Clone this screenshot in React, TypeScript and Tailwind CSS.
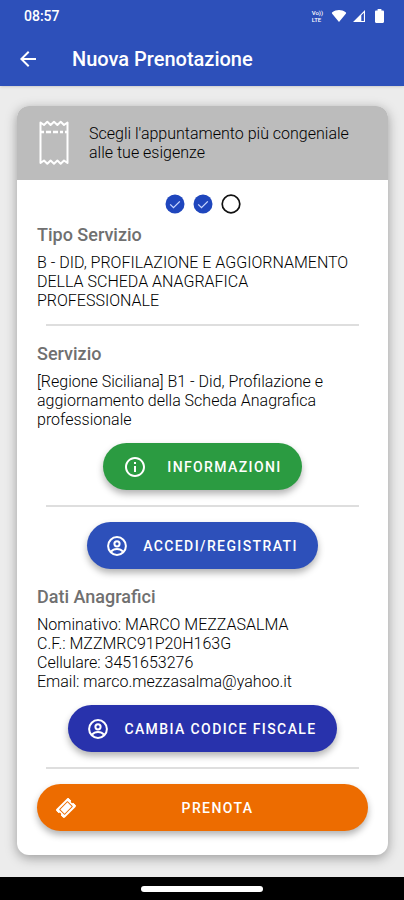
import type { ReactNode } from 'react';
import clsx from 'clsx';
import { FaTicketAlt } from 'react-icons/fa';
import { MdArrowBack, MdInfoOutline } from 'react-icons/md';

const StatusBar = () => (
	<div className="flex h-8 items-center justify-between pl-6 pr-5 text-sm font-medium">
		<span>08:57</span>
		<div className="flex items-center gap-1">
			<div className="flex flex-col text-[6px] font-medium leading-[7px]">
				<span>Vo))</span>
				<span>LTE</span>
			</div>
			<svg viewBox="0 0 16 13" className="ml-1 h-3 w-4" fill="currentColor">
				<path d="M8 13 .6 4.1C.1 3.500.2 2.800.8 2.400 5-.8 11-.8 15.200 2.400c.6.4.7 1.100.2 1.700Z" />
			</svg>
			<svg viewBox="0 0 14 13" className="h-3 w-4" fill="currentColor">
				<path fillRule="evenodd" d="M13.500 0v13H.5ZM12.300 3v8.800H9.500V5.800Z" />
			</svg>
			<svg viewBox="0 0 9 14" className="ml-1 h-3.5 w-[9px]" fill="currentColor">
				<path d="M2.600 0h3.800v1.500h1.400c.7 0 1.200.5 1.200 1.200v10.100c0 .7-.5 1.200-1.200 1.200H1.200C.5 14 0 13.500 0 12.800V2.700C0 2 .5 1.500 1.200 1.500h1.400Z" />
			</svg>
		</div>
	</div>
);

const ReceiptIcon = () => (
	<svg
		viewBox="0 0 30 46"
		className="h-[46px] w-[30px] shrink-0"
		fill="none"
		stroke="white"
		strokeWidth="2"
		strokeLinejoin="round"
		strokeLinecap="round"
	>
		<path d="M1.500 2.500 5 5l3.300-3.200L11.600 5 15 1.800 18.400 5l3.300-3.200L25 5l3.500-2.500v40.500L25 40.500l-3.300 3.200-3.300-3.200-3.400 3.200-3.400-3.200-3.300 3.200L5 40.500l-3.500 2.500Z" />
		<path d="M1.500 12H5M7 12h5M14 12h5M21 12h3M26 12h2.500" strokeWidth="2.500" strokeLinecap="butt" />
	</svg>
);

const AccountIcon = () => (
	<svg viewBox="0 0 20 20" className="size-5" fill="none" stroke="currentColor" strokeWidth="2">
		<circle cx="10" cy="10" r="8.900" />
		<circle cx="10" cy="7.800" r="2.600" />
		<path d="M4 15.600c1.500-1.800 3.700-2.700 6-2.700s4.500.9 6 2.700" />
	</svg>
);

const Step = ({ done }: { done: boolean }) => (
	<li aria-label={done ? 'Completato' : 'Da completare'}>
		<svg viewBox="0 0 20 20" className="size-5" fill="none">
			{done ? (
				<>
					<circle cx="10" cy="10" r="9.500" fill="#1f46bd" />
					<path d="m5.200 10.400 3.300 3.300 6.300-6.300" stroke="#c9d6ff" strokeWidth="1.300" />
				</>
			) : (
				<circle cx="10" cy="10" r="8.800" stroke="#111" strokeWidth="1.700" />
			)}
		</svg>
	</li>
);

type PillButtonProps = {
	icon: ReactNode;
	className?: string;
	children: ReactNode;
};

const PillButton = ({ icon, className, children }: PillButtonProps) => (
	<button
		type="button"
		className={clsx(
			'flex h-[47px] items-center rounded-full text-sm font-medium uppercase tracking-widest text-white shadow-[0_4px_7px_rgba(0,0,0,0.3)]',
			className,
		)}
	>
		{icon}
		{children}
	</button>
);

const Block = ({ title, children }: { title: string; children: ReactNode }) => (
	<div className="mb-3.5 flex flex-col gap-1.5">
		<h2 className="text-lg leading-6 font-medium text-[#707070]">{title}</h2>
		<div>{children}</div>
	</div>
);

const Divider = () => <hr className="mx-[9px] border-t-2 border-[#dedede]" />;

export default function App() {
	return (
		<div className="flex min-h-screen flex-col bg-[#ececec] font-[Roboto,sans-serif] text-black">
			<header className="bg-[#2d50ba] text-white shadow-sm">
				<StatusBar />
				<div className="flex h-[54px] items-center gap-8 px-4">
					<button type="button" aria-label="Indietro">
						<MdArrowBack className="size-6" />
					</button>
					<h1 className="text-xl font-medium">Nuova Prenotazione</h1>
				</div>
			</header>

			<main className="grow pt-5 pr-4 pb-5 pl-[17px]">
				<section className="overflow-hidden rounded-xl bg-white leading-[19px] font-light shadow-[0_3px_12px_rgba(0,0,0,0.35)]">
					<div className="flex items-center gap-5 bg-[#bcbcbc] px-[22px] py-3.5">
						<ReceiptIcon />
						<p>Scegli l&apos;appuntamento più congeniale alle tue esigenze</p>
					</div>

					<div className="flex flex-col px-5 pt-3.5 pb-6">
						<ol className="mb-[9px] flex justify-center gap-2">
							<Step done />
							<Step done />
							<Step done={false} />
						</ol>

						<Block title="Tipo Servizio">
							<p>B - DID, PROFILAZIONE E AGGIORNAMENTO DELLA SCHEDA ANAGRAFICA PROFESSIONALE</p>
						</Block>
						<Divider />

						<div className="mt-4 mb-[15px] flex flex-col">
							<Block title="Servizio">
								<p>
									[Regione Siciliana] B1 - Did, Profilazione e aggiornamento della Scheda Anagrafica
									professionale
								</p>
							</Block>
							<PillButton
								icon={<MdInfoOutline className="size-6" />}
								className="gap-5 self-center bg-[#2b9b41] px-5"
							>
								Informazioni
							</PillButton>
						</div>
						<Divider />

						<div className="my-[15px] flex flex-col">
							<PillButton icon={<AccountIcon />} className="mb-4 gap-4 self-center bg-[#2d50ba] px-5">
								Accedi/Registrati
							</PillButton>
							<Block title="Dati Anagrafici">
								<p>Nominativo: MARCO MEZZASALMA</p>
								<p>C.F.: MZZMRC91P20H163G</p>
								<p>Cellulare: 3451653276</p>
								<p>Email: marco.mezzasalma@yahoo.it</p>
							</Block>
							<PillButton icon={<AccountIcon />} className="gap-4 self-center bg-[#2832ac] px-5">
								Cambia codice fiscale
							</PillButton>
						</div>
						<Divider />

						<PillButton
							icon={<FaTicketAlt className="size-[18px] -rotate-45" />}
							className="mt-[15px] bg-[#ed6c00] pr-2 pl-5"
						>
							<span className="grow">Prenota</span>
						</PillButton>
					</div>
				</section>
			</main>

			<footer className="flex h-[23px] items-center justify-center bg-black">
				<div className="h-1.5 w-[30%] rounded-full bg-white" />
			</footer>
		</div>
	);
}
